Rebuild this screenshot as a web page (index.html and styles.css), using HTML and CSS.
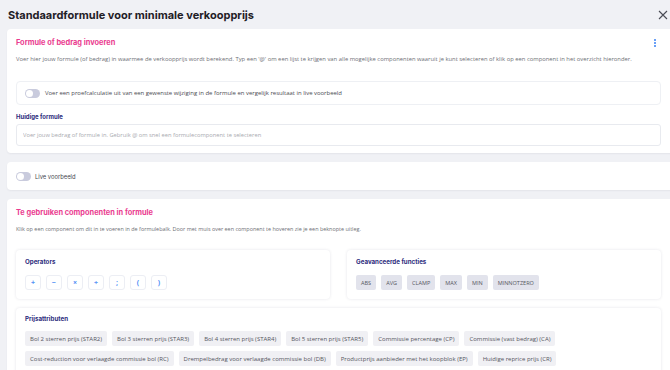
FILE: index.html
```html
<!DOCTYPE html>
<html lang="nl">
<head>
    <meta charset="UTF-8">
    <meta name="viewport" content="width=device-width, initial-scale=1.0">
    <title>Standaardformule voor minimale verkoopprijs</title>
    <link rel="stylesheet" href="styles.css">
</head>
<body>

    <div class="modal-header">
        <h1 class="modal-title">Standaardformule voor minimale verkoopprijs</h1>
        <button class="close-btn" aria-label="Sluiten">
            <svg width="10" height="10" viewBox="0 0 10 10"><path d="M1 1L9 9M9 1L1 9" stroke="#4a4c55" stroke-width="1.1" fill="none"/></svg>
        </button>
    </div>

    <div class="modal-body">

        <div class="card">
            <div class="card-head">
                <h2 class="card-title">Formule of bedrag invoeren</h2>
                <span class="more-dots"><i></i><i></i><i></i></span>
            </div>
            <p class="card-text">Voer hier jouw formule (of bedrag) in waarmee de verkoopprijs wordt berekend. Typ een '@' om een lijst te krijgen van alle mogelijke componenten waaruit je kunt selecteren of klik op een component in het overzicht hieronder.</p>

            <div class="toggle-box">
                <span class="toggle"></span>
                <span class="toggle-label">Voer een proefcalculatie uit van een gewenste wijziging in de formule en vergelijk resultaat in live voorbeeld</span>
            </div>

            <label class="field-label" for="formula">Huidige formule</label>
            <input class="formula-input" type="text" id="formula" placeholder="Voer jouw bedrag of formule in. Gebruik @ om snel een formulecomponent te selecteren">
        </div>

        <div class="card card-live">
            <span class="toggle"></span>
            <span class="live-label">Live voorbeeld</span>
        </div>

        <div class="card">
            <h2 class="card-title">Te gebruiken componenten in formule</h2>
            <p class="card-text card-text-alt">Klik op een component om dit in te voeren in de formulebalk. Door met muis over een component te hoveren zie je een beknopte uitleg.</p>

            <div class="sub-row">
                <div class="sub-card">
                    <h3 class="sub-title">Operators</h3>
                    <div class="chip-list">
                        <button class="op-btn">+</button>
                        <button class="op-btn">&minus;</button>
                        <button class="op-btn">&times;</button>
                        <button class="op-btn">&divide;</button>
                        <button class="op-btn">;</button>
                        <button class="op-btn">(</button>
                        <button class="op-btn">)</button>
                    </div>
                </div>
                <div class="sub-card">
                    <h3 class="sub-title">Geavanceerde functies</h3>
                    <div class="chip-list">
                        <button class="fn-chip">ABS</button>
                        <button class="fn-chip">AVG</button>
                        <button class="fn-chip">CLAMP</button>
                        <button class="fn-chip">MAX</button>
                        <button class="fn-chip">MIN</button>
                        <button class="fn-chip">MINNOTZERO</button>
                    </div>
                </div>
            </div>

            <div class="sub-card sub-card-wide">
                <h3 class="sub-title">Prijsattributen</h3>
                <div class="chip-list">
                    <button class="attr-chip">Bol 2 sterren prijs (STAR2)</button>
                    <button class="attr-chip">Bol 3 sterren prijs (STAR3)</button>
                    <button class="attr-chip">Bol 4 sterren prijs (STAR4)</button>
                    <button class="attr-chip">Bol 5 sterren prijs (STAR5)</button>
                    <button class="attr-chip">Commissie percentage (CP)</button>
                    <button class="attr-chip">Commissie (vast bedrag) (CA)</button>
                    <button class="attr-chip">Cost-reduction voor verlaagde commissie bol (RC)</button>
                    <button class="attr-chip">Drempelbedrag voor verlaagde commissie bol (DB)</button>
                    <button class="attr-chip">Productprijs aanbieder met het koopblok (EP)</button>
                    <button class="attr-chip">Huidige reprice prijs (CR)</button>
                    <button class="attr-chip">Laagste prijs concurrent met koopblok (LPK)</button>
                    <button class="attr-chip">Inkoopprijs (IP)</button>
                </div>
            </div>
        </div>

    </div>

</body>
</html>
```

FILE: styles.css
```css
body {
    margin: 0;
    background-color: #f0f1f5;
    font-family: "Open Sans", sans-serif;
    color: #55565c;
    overflow: hidden;
    height: 370px;
}

.modal-header {
    height: 29px;
    display: flex;
    align-items: center;
    justify-content: space-between;
    padding: 0 2px 0 8px;
}

.modal-title {
    margin: 1px 0 0;
    font-family: Inter, sans-serif;
    font-size: 11px;
    font-weight: 700;
    color: #1f2026;
}

.close-btn {
    border: none;
    background: none;
    padding: 0;
    width: 10px;
    height: 10px;
    display: flex;
}

.modal-body {
    padding-left: 7px;
}

.card {
    background-color: #fff;
    border-radius: 4px;
    margin-right: -20px;
    margin-bottom: 9px;
    padding: 9px 29px 7px 9px;
    box-shadow: 0 1px 2px rgba(30, 35, 60, 0.06);
}

.card-head {
    display: flex;
    justify-content: space-between;
    align-items: center;
}

.card-title {
    margin: 0;
    font-family: Inter, sans-serif;
    font-size: 7.4px;
    line-height: 10px;
    font-weight: 700;
    color: #ea3c8f;
}

.more-dots {
    display: flex;
    flex-direction: column;
    gap: 1.5px;
    margin-right: 5px;
}

.more-dots i {
    width: 1.6px;
    height: 1.6px;
    border-radius: 50%;
    background-color: #4c8df5;
}

.card-text {
    margin: 7px 0 0;
    font-size: 5.85px;
    line-height: 8px;
    color: #6e6f76;
}

.card-text-alt {
    font-size: 5.45px;
}

.toggle-box {
    margin-top: 18px;
    height: 24px;
    box-sizing: border-box;
    border: 1px solid #eef0f4;
    border-radius: 4px;
    display: flex;
    align-items: center;
    padding-left: 8px;
}

.toggle {
    position: relative;
    width: 15px;
    height: 9px;
    border-radius: 5px;
    background-color: #c9cbdd;
    flex-shrink: 0;
}

.toggle::after {
    content: "";
    position: absolute;
    left: 1px;
    top: 1px;
    width: 7px;
    height: 7px;
    border-radius: 50%;
    background-color: #fff;
}

.toggle-label {
    margin-left: 5px;
    font-size: 5.95px;
    color: #4a4b52;
}

.field-label {
    display: block;
    margin-top: 7px;
    font-family: Inter, sans-serif;
    font-size: 6px;
    line-height: 10px;
    font-weight: 700;
    color: #2c2b7c;
}

.formula-input {
    display: block;
    margin-top: 2px;
    width: 100%;
    height: 22px;
    box-sizing: border-box;
    border: 1px solid #e8eaef;
    border-radius: 3px;
    padding: 0 6px;
    font-family: "Open Sans", sans-serif;
    font-size: 5.75px;
    outline: none;
}

.formula-input::placeholder {
    color: #a9aab0;
}

.card-live {
    height: 28px;
    box-sizing: border-box;
    padding: 0 9px;
    display: flex;
    align-items: center;
}

.live-label {
    margin-left: 4px;
    font-family: Inter, sans-serif;
    font-size: 5.8px;
    color: #45464d;
}

.sub-row {
    margin-top: 17px;
    display: grid;
    grid-template-columns: 1fr 1fr;
    gap: 17px;
}

.sub-card {
    background-color: #fff;
    border-radius: 4px;
    box-shadow: 0 0 3px rgba(30, 35, 70, 0.12);
    padding: 7px 9px 9px;
}

.sub-card-wide {
    margin-top: 9px;
    padding-top: 6px;
}

.sub-title {
    margin: 0;
    font-family: Inter, sans-serif;
    font-size: 6.2px;
    line-height: 10px;
    font-weight: 700;
    color: #2c2b7c;
}

.chip-list {
    margin-top: 8px;
    display: flex;
    flex-wrap: wrap;
    gap: 5px;
}

.sub-card-wide .chip-list {
    margin-top: 7px;
}

.op-btn {
    width: 16px;
    height: 15px;
    padding: 0;
    border: 1px solid #eceef4;
    border-radius: 3px;
    background-color: #fff;
    color: #4f8ef5;
    font-family: "Open Sans", sans-serif;
    font-size: 7px;
    font-weight: 700;
}

.fn-chip {
    height: 15px;
    padding: 0 5px;
    border: none;
    border-radius: 2px;
    background-color: #e2e3ec;
    color: #55565e;
    font-family: "Open Sans", sans-serif;
    font-size: 5.55px;
}

.attr-chip {
    height: 15px;
    padding: 0 5px;
    border: none;
    border-radius: 2px;
    background-color: #f0f0f4;
    color: #55565e;
    font-family: "Open Sans", sans-serif;
    font-size: 6px;
}
```
